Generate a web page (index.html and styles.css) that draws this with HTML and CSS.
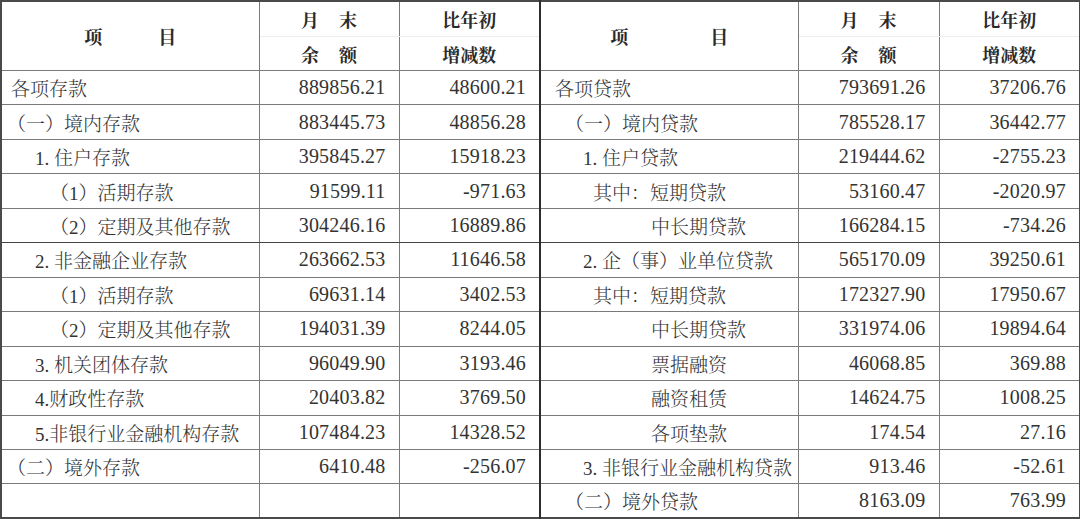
FILE: index.html
```html
<!DOCTYPE html>
<html lang="zh-CN">
<head>
<meta charset="utf-8">
<title>存贷款统计表</title>
<link rel="stylesheet" href="styles.css">
</head>
<body>
<table class="sheet">
  <colgroup>
    <col class="c-name"><col class="c-num"><col class="c-num2 c-mid">
    <col class="c-name2"><col class="c-num3"><col class="c-num4">
  </colgroup>
  <thead>
    <tr class="h1">
      <th rowspan="2" class="hname"><span class="hl">项</span><span class="hr">目</span></th>
      <th class="sub top"><span class="gap">月</span>末</th>
      <th class="sub top div">比年初</th>
      <th rowspan="2" class="hname"><span class="hl wide">项</span><span class="hr">目</span></th>
      <th class="sub top"><span class="gap">月</span>末</th>
      <th class="sub top">比年初</th>
    </tr>
    <tr class="h2">
      <th class="sub bot"><span class="gap">余</span>额</th>
      <th class="sub bot div">增减数</th>
      <th class="sub bot"><span class="gap">余</span>额</th>
      <th class="sub bot">增减数</th>
    </tr>
  </thead>
  <tbody>
    <tr>
      <td class="t l0">各项存款</td><td class="n">889856.21</td><td class="n div">48600.21</td>
      <td class="t r0">各项贷款</td><td class="n">793691.26</td><td class="n">37206.76</td>
    </tr>
    <tr>
      <td class="t lp">（一）境内存款</td><td class="n">883445.73</td><td class="n div">48856.28</td>
      <td class="t rp">（一）境内贷款</td><td class="n">785528.17</td><td class="n">36442.77</td>
    </tr>
    <tr>
      <td class="t l1">1. 住户存款</td><td class="n">395845.27</td><td class="n div">15918.23</td>
      <td class="t r1">1. 住户贷款</td><td class="n">219444.62</td><td class="n">-2755.23</td>
    </tr>
    <tr>
      <td class="t l2">（1）活期存款</td><td class="n">91599.11</td><td class="n div">-971.63</td>
      <td class="t r2">其中：短期贷款</td><td class="n">53160.47</td><td class="n">-2020.97</td>
    </tr>
    <tr class="strong">
      <td class="t l2">（2）定期及其他存款</td><td class="n">304246.16</td><td class="n div">16889.86</td>
      <td class="t r3">中长期贷款</td><td class="n">166284.15</td><td class="n">-734.26</td>
    </tr>
    <tr>
      <td class="t l1">2. 非金融企业存款</td><td class="n">263662.53</td><td class="n div">11646.58</td>
      <td class="t r1">2. 企（事）业单位贷款</td><td class="n">565170.09</td><td class="n">39250.61</td>
    </tr>
    <tr>
      <td class="t l2">（1）活期存款</td><td class="n">69631.14</td><td class="n div">3402.53</td>
      <td class="t r2">其中：短期贷款</td><td class="n">172327.90</td><td class="n">17950.67</td>
    </tr>
    <tr>
      <td class="t l2">（2）定期及其他存款</td><td class="n">194031.39</td><td class="n div">8244.05</td>
      <td class="t r3">中长期贷款</td><td class="n">331974.06</td><td class="n">19894.64</td>
    </tr>
    <tr>
      <td class="t l1">3. 机关团体存款</td><td class="n">96049.90</td><td class="n div">3193.46</td>
      <td class="t r3">票据融资</td><td class="n">46068.85</td><td class="n">369.88</td>
    </tr>
    <tr>
      <td class="t l1">4.财政性存款</td><td class="n">20403.82</td><td class="n div">3769.50</td>
      <td class="t r3">融资租赁</td><td class="n">14624.75</td><td class="n">1008.25</td>
    </tr>
    <tr>
      <td class="t l1">5.非银行业金融机构存款</td><td class="n">107484.23</td><td class="n div">14328.52</td>
      <td class="t r3">各项垫款</td><td class="n">174.54</td><td class="n">27.16</td>
    </tr>
    <tr>
      <td class="t lp">（二）境外存款</td><td class="n">6410.48</td><td class="n div">-256.07</td>
      <td class="t r1">3. 非银行业金融机构贷款</td><td class="n">913.46</td><td class="n">-52.61</td>
    </tr>
    <tr class="last">
      <td class="t l0"></td><td class="n"></td><td class="n div"></td>
      <td class="t rp">（二）境外贷款</td><td class="n">8163.09</td><td class="n">763.99</td>
    </tr>
  </tbody>
</table>
</body>
</html>
```

FILE: styles.css
```css
html, body {
  margin: 0;
  padding: 0;
  background: #ffffff;
}

.sheet {
  border-collapse: collapse;
  table-layout: fixed;
  width: 1079px;
  font-family: "Liberation Serif", "Noto Serif CJK SC", "Noto Sans CJK SC", serif;
  font-size: 20px;
  color: #2b2b2b;
  border: 2px solid #4a4a4a;
}

.c-name { width: 258px; }
.c-num { width: 140px; }
.c-num2 { width: 141px; }
.c-name2 { width: 258px; }
.c-num3 { width: 141px; }
.c-num4 { width: 141px; }

.sheet th,
.sheet td {
  border: 1px solid #7a7a7a;
  padding: 0;
  white-space: nowrap;
  overflow: hidden;
}

.sheet th {
  font-family: "Noto Serif CJK SC", "Noto Sans CJK SC", sans-serif;
  font-weight: 700;
  font-size: 18px;
  color: #2a2a2a;
}

.sheet th.div,
.sheet td.div {
  border-right: 2px solid #2e2e2e;
}

.h1 th { height: 34px; }
.h2 th { height: 33px; }

.sub.top {
  border-bottom: 1px solid #ececec;
  vertical-align: middle;
}
.sub.bot {
  border-top: 1px solid #ececec;
  vertical-align: middle;
}

.gap {
  display: inline-block;
  margin-right: 20px;
}

.hname {
  text-align: center;
  vertical-align: middle;
}
.hl { display: inline-block; margin-right: 56px; }
.hl.wide { margin-right: 82px; }
.hr { display: inline-block; }

.sheet tbody tr { height: 34.46px; }
.sheet tbody tr.strong td { border-bottom-color: #444444; }

.t {
  font-family: "Liberation Serif", "Noto Serif CJK SC", "Noto Sans CJK SC", serif;
  font-size: 19px;
  font-weight: 300;
  text-align: left;
  color: #333333;
}

.n {
  text-align: right;
  padding-right: 13px !important;
  letter-spacing: 0.2px;
  color: #333333;
}

.l0 { padding-left: 9px !important; }
.lp { padding-left: 5px !important; }
.l1 { padding-left: 33px !important; }
.l2 { padding-left: 48px !important; }

.r0 { padding-left: 14px !important; }
.rp { padding-left: 24px !important; }
.r1 { padding-left: 42px !important; }
.r2 { padding-left: 52px !important; }
.r3 { padding-left: 110px !important; }
```
